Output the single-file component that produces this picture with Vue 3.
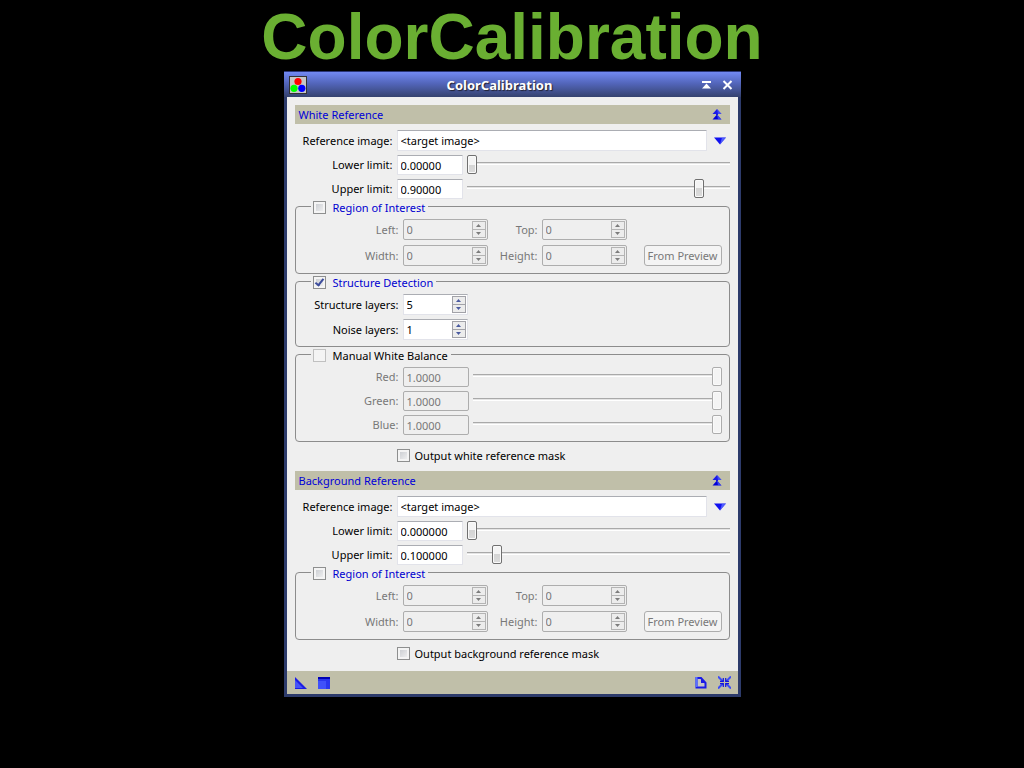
<script setup>
import { reactive } from 'vue'

const sections = reactive([
  {
    id: 'white', title: 'White Reference', image: '<target image>',
    limits: [
      { label: 'Lower limit:', text: '0.00000', value: 0 },
      { label: 'Upper limit:', text: '0.90000', value: 90 }
    ],
    balance: true, mask: 'Output white reference mask'
  },
  {
    id: 'background', title: 'Background Reference', image: '<target image>',
    limits: [
      { label: 'Lower limit:', text: '0.000000', value: 0 },
      { label: 'Upper limit:', text: '0.100000', value: 10 }
    ],
    balance: false, mask: 'Output background reference mask'
  }
])
const roi = ['Left:', 'Top:', 'Width:', 'Height:']
const layers = reactive([
  { label: 'Structure layers:', value: 5 },
  { label: 'Noise layers:', value: 1 }
])
const channels = ['Red:', 'Green:', 'Blue:']
</script>

<template>
  <main class="stage">
    <h1 class="headline">ColorCalibration</h1>
    <section class="window" aria-label="ColorCalibration">
      <header class="titlebar">
        <svg class="app-icon" width="18" height="18" viewBox="0 0 18 18" aria-hidden="true">
          <rect x="0.5" y="0.5" width="17" height="17" fill="#c6c6c6" stroke="#333" />
          <circle cx="9" cy="5.5" r="3.6" fill="#f00" />
          <circle cx="5" cy="12.3" r="3.6" fill="#0f0" />
          <circle cx="12.8" cy="12.3" r="3.6" fill="#00f" />
        </svg>
        <h2 class="caption">ColorCalibration</h2>
        <button class="icon-button" aria-label="Shade">
          <svg width="11" height="10" viewBox="0 0 11 10"><path d="M1 1h9v2H1zM5.500 3.500L10 8.500H1z" fill="#fff" /></svg>
        </button>
        <button class="icon-button" aria-label="Close">
          <svg width="11" height="10" viewBox="0 0 11 10"><path d="M1.500 1l8 8M9.500 1l-8 8" stroke="#fff" stroke-width="2" fill="none" /></svg>
        </button>
      </header>

      <div class="content">
        <section v-for="s in sections" :key="s.id" class="section">
          <div class="section-bar">
            <h3>{{ s.title }}</h3>
            <button class="icon-button" :aria-label="'Collapse ' + s.title">
              <svg width="10" height="11" viewBox="0 0 10 11">
                <path d="M5 0l4.500 5h-9z" fill="#1a1ae8" />
                <path d="M4 5h2v1H4z" fill="#1a1ae8" />
                <path d="M5 5.500l4.500 5h-9z" fill="#0000d8" />
                <path d="M5 0l4.500 5H6zM5 5.500l4.500 5H6z" fill="#5a6cff" opacity=".6" />
              </svg>
            </button>
          </div>

          <div class="rows">
            <div class="row image-row">
              <label :for="s.id + '-image'">Reference image:</label>
              <input :id="s.id + '-image'" v-model="s.image" class="field image" type="text" />
              <button class="icon-button" aria-label="Select image">
                <svg width="12" height="8" viewBox="0 0 12 8"><path d="M0 .5h12L6 7.500z" fill="#1010f0" /><path d="M8 .5h4L6 7.500z" fill="#6a7cff" opacity=".7" /></svg>
              </button>
            </div>
            <div v-for="(l, i) in s.limits" :key="l.label" class="row limit-row">
              <label :for="s.id + '-limit-' + i">{{ l.label }}</label>
              <input :id="s.id + '-limit-' + i" v-model="l.text" class="field" type="text" />
              <input v-model="l.value" type="range" min="0" max="100" :aria-label="l.label" />
            </div>
          </div>

          <fieldset class="group">
            <legend>
              <label class="blue"><input type="checkbox" />Region of Interest</label>
            </legend>
            <div class="roi">
              <template v-for="(name, i) in roi" :key="name">
                <label :for="s.id + '-roi-' + i" class="off">{{ name }}</label>
                <div class="spin off">
                  <input :id="s.id + '-roi-' + i" type="text" value="0" disabled />
                  <div class="steppers">
                    <button disabled :aria-label="'Increase ' + name"><svg width="5" height="3" viewBox="0 0 5 3"><path d="M2.500 0L5 3H0z" /></svg></button>
                    <button disabled :aria-label="'Decrease ' + name"><svg width="5" height="3" viewBox="0 0 5 3"><path d="M0 0h5L2.500 3z" /></svg></button>
                  </div>
                </div>
                <span v-if="i === 1"></span>
              </template>
              <button class="push" disabled>From Preview</button>
            </div>
          </fieldset>

          <template v-if="s.balance">
            <fieldset class="group">
              <legend>
                <label class="blue"><input type="checkbox" checked />Structure Detection</label>
              </legend>
              <div class="layers">
                <template v-for="(l, i) in layers" :key="l.label">
                  <label :for="'layer-' + i">{{ l.label }}</label>
                  <div class="spin">
                    <input :id="'layer-' + i" v-model="l.value" type="text" />
                    <div class="steppers">
                      <button :aria-label="'Increase ' + l.label" @click="l.value++"><svg width="5" height="3" viewBox="0 0 5 3"><path d="M2.500 0L5 3H0z" /></svg></button>
                      <button :aria-label="'Decrease ' + l.label" @click="l.value--"><svg width="5" height="3" viewBox="0 0 5 3"><path d="M0 0h5L2.500 3z" /></svg></button>
                    </div>
                  </div>
                </template>
              </div>
            </fieldset>

            <fieldset class="group">
              <legend>
                <label><input type="checkbox" class="faint" />Manual White Balance</label>
              </legend>
              <div class="channels">
                <template v-for="(c, i) in channels" :key="c">
                  <label :for="'channel-' + i" class="off">{{ c }}</label>
                  <input :id="'channel-' + i" class="field" type="text" value="1.0000" disabled />
                  <input type="range" min="0" max="100" value="100" disabled :aria-label="c" />
                </template>
              </div>
            </fieldset>
          </template>

          <label class="mask"><input type="checkbox" />{{ s.mask }}</label>
        </section>
      </div>

      <footer class="footer">
        <button class="icon-button" aria-label="New instance">
          <svg width="12" height="12" viewBox="0 0 12 12"><path d="M0 0l12 12H0z" fill="#1c1ce4" /><path d="M0 3l8 8H0z" fill="#5a6cff" opacity=".7" /></svg>
        </button>
        <button class="icon-button" aria-label="Apply">
          <svg width="12" height="12" viewBox="0 0 12 12"><path d="M0 0h12v12H0z" fill="#2a36ee" /><path d="M0 4h8v8H0z" fill="#4a5cff" opacity=".7" /><path d="M0 0h12v2H0z" fill="#0000b4" /></svg>
        </button>
        <span class="spacer"></span>
        <button class="icon-button" aria-label="Documentation">
          <svg width="12" height="12" viewBox="0 0 12 12"><path d="M1.500 1h4.500l4.500 5v4.500h-9z" fill="#c4c4c8" stroke="#1a1ae6" stroke-width="2" /><path d="M6 1v5h5z" fill="#1a1ae6" /><path d="M1.500 0v10" stroke="#5a70ff" stroke-width="2" /></svg>
        </button>
        <button class="icon-button" aria-label="Reset">
          <svg width="13" height="13" viewBox="0 0 13 13" fill="none"><path d="M0 .5l5 5M13 .5l-5 5M0 12.500l5-5M13 12.500l-5-5" stroke="#3c4cf8" stroke-width="2" /><path d="M2 5.300h3.300V2M7.700 2v3.300H11M2 7.700h3.300V11M11 7.700H7.700V11" stroke="#1414dc" stroke-width="1.200" /></svg>
        </button>
      </footer>
    </section>
  </main>
</template>

<style>
body { background: #000; }
</style>

<style scoped>
.stage {
  display: flex;
  flex-direction: column;
  align-items: center;
  font: 11px/16px "Noto Sans", "Open Sans", sans-serif;
  color: #000;
}
h1, h2, h3 { margin: 0; }
button, input { font: inherit; color: inherit; margin: 0; box-sizing: border-box; }
.headline {
  height: 71px;
  font: bold 64px/74px "Liberation Sans", Arial, sans-serif;
  color: #6aaf32;
}
.window {
  width: 457px;
  max-width: 100%;
  box-sizing: border-box;
  border: 3px solid #2d3b6b;
  border-top: 1px solid #2a3577;
  background: #efefef;
}
.titlebar {
  display: flex;
  align-items: center;
  gap: 10px;
  height: 25px;
  margin: 0 -3px;
  padding: 1px 8px 0 5px;
  box-sizing: border-box;
  background: linear-gradient(#7289f2, #5366bb 45%, #35426f);
}
.caption {
  flex: 1;
  padding-right: 8px;
  text-align: center;
  font-size: 13px;
  font-weight: bold;
  color: #fff;
  text-shadow: 1px 1px 1px #223;
}
.icon-button {
  display: flex;
  padding: 0;
  border: 0;
  background: none;
}
.content { padding: 8px 8px 4px; }
.section + .section { margin-top: 2px; }
.section-bar {
  display: flex;
  align-items: center;
  justify-content: space-between;
  height: 19px;
  padding: 0 8px 0 4px;
  background: #c0bfa9;
  color: #0000d8;
}
.section-bar h3 { font-size: 11px; font-weight: normal; }
.rows { display: grid; gap: 4px; padding-top: 6px; }
.row { display: grid; column-gap: 4px; align-items: center; }
.row label, .roi label, .layers label, .channels label { text-align: right; white-space: nowrap; }
.image-row { grid-template-columns: 98px 1fr 19px; }
.image-row .icon-button { justify-content: center; }
.image-row .field { height: 21px; }
.limit-row { grid-template-columns: 98px 66px 1fr; }
.field {
  width: 100%;
  min-width: 0;
  height: 20px;
  padding: 0 3px;
  border: 1px solid #e2e3ea;
  border-top-color: #abadb3;
  border-radius: 1px;
  background: #fff;
}
.field:disabled, .spin.off {
  border: 1px solid #adadad;
  border-radius: 2px;
  background: #efefef;
  color: #787878;
}
.off { color: #787878; }
input[type="range"] {
  appearance: none;
  align-self: start;
  width: 100%;
  min-width: 0;
  height: 17px;
  background: none;
}
input[type="range"]::-webkit-slider-runnable-track {
  height: 3px;
  box-sizing: border-box;
  border-top: 1px solid #a9a9a9;
  border-bottom: 1px solid #fff;
  background: #e4e4e4;
}
input[type="range"]::-webkit-slider-thumb {
  appearance: none;
  width: 10px;
  height: 19px;
  margin-top: -8px;
  box-sizing: border-box;
  border: 1px solid #707070;
  border-radius: 2px;
  background: linear-gradient(#f4f4f4 50%, #d4d4d4 50%, #dcdcdc);
  box-shadow: inset 0 0 0 1px #fafafa;
}
input[type="range"]:disabled::-webkit-slider-thumb {
  border-color: #adadad;
  background: #f4f4f4;
}
.group {
  min-width: 0;
  margin: 0;
  padding: 5px 7px 7px 15px;
  border: 1px solid #8c8c8c;
  border-radius: 4px;
}
legend { height: 15px; padding: 0 3px 0 2px; }
legend label { display: flex; align-items: center; gap: 7px; height: 17px; }
.blue { color: #0000d0; }
input[type="checkbox"] {
  appearance: none;
  flex: none;
  width: 13px;
  height: 13px;
  border: 1px solid #8e8f8f;
  background: linear-gradient(135deg, #c4c7cc, #f6f6f6);
  box-shadow: inset 0 0 0 2px #f4f4f4;
}
input[type="checkbox"].faint { border-color: #c0c0c0; background: #f4f4f4; }
input[type="checkbox"]:checked::before {
  content: "";
  display: block;
  width: 3px;
  height: 7px;
  margin: 0 0 0 3px;
  border: solid #3c4c9c;
  border-width: 0 2px 2px 0;
  transform: rotate(38deg);
}
.roi {
  display: grid;
  grid-template-columns: 88px 85px 46px 85px 1fr;
  gap: 5px 4px;
  align-items: center;
}
.spin {
  display: flex;
  box-sizing: border-box;
  height: 21px;
  padding: 1px;
  border: 1px solid #e2e3ea;
  border-top-color: #abadb3;
  background: #fff;
}
.spin input {
  flex: 1;
  width: 0;
  min-width: 0;
  padding: 0 2px;
  border: 0;
  background: none;
}
.steppers { display: grid; grid-template-rows: 1fr 1fr; width: 14px; }
.steppers button {
  display: flex;
  align-items: center;
  justify-content: center;
  min-height: 0;
  padding: 0;
  border: 1px solid #a2a2a8;
  background: #ececec;
}
.steppers button + button { border-top: 0; }
.steppers path { fill: #4a5aa0; }
.off .steppers button { border-color: #b4b4b4; }
.off .steppers path { fill: #7c7c7c; }
.push {
  justify-self: end;
  width: 78px;
  height: 21px;
  padding: 0;
  border: 1px solid #adadad;
  border-radius: 3px;
  background: #f4f4f4;
  color: #787878;
  white-space: nowrap;
}
.layers {
  display: grid;
  grid-template-columns: 88px 65px;
  gap: 4px;
  align-items: center;
}
.channels {
  display: grid;
  grid-template-columns: 88px 66px 1fr;
  gap: 4px;
  align-items: center;
  margin-bottom: -1px;
}
.layers { margin-bottom: -1px; }
.mask {
  display: flex;
  align-items: center;
  gap: 5px;
  height: 27px;
  padding-left: 102px;
}
.footer {
  display: flex;
  align-items: center;
  gap: 11px;
  height: 23px;
  padding: 0 7px 0 8px;
  background: #c0bfa9;
}
.spacer { flex: 1; }
</style>
